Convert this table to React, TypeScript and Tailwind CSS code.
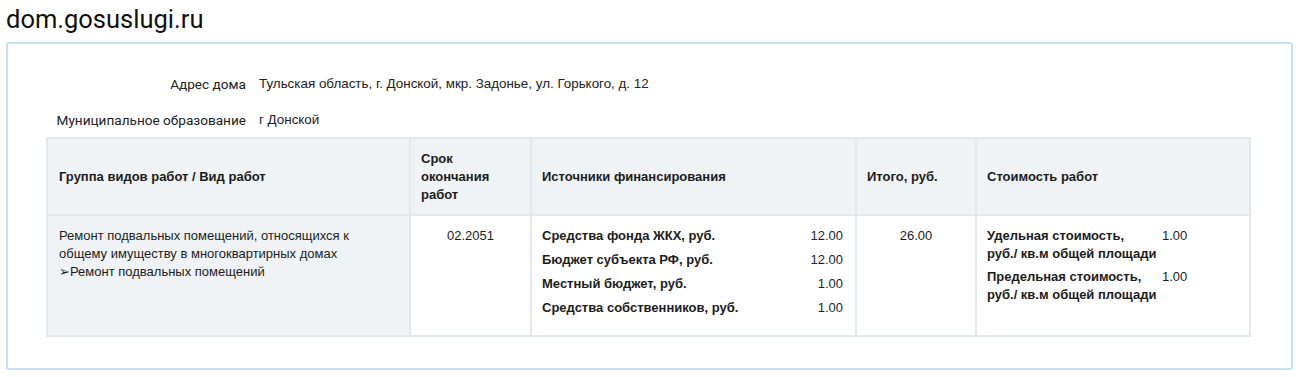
const sources = [
  { label: "Средства фонда ЖКХ, руб.", value: "12.00" },
  { label: "Бюджет субъекта РФ, руб.", value: "12.00" },
  { label: "Местный бюджет, руб.", value: "1.00" },
  { label: "Средства собственников, руб.", value: "1.00" },
];

const costs = [
  { label: "Удельная стоимость,", unit: "руб./ кв.м общей площади", value: "1.00" },
  { label: "Предельная стоимость,", unit: "руб./ кв.м общей площади", value: "1.00" },
];

function InfoRow({ label, value }: { label: string; value: string }) {
  return (
    <div className="flex h-[36px] items-center pt-[3px]">
      <div className="w-[251px] pr-[13px] text-right font-['Roboto',sans-serif] text-[13.6px] text-[#222]">
        {label}
      </div>
      <div className="text-[13.4px] text-[#222]">{value}</div>
    </div>
  );
}

export default function App() {
  return (
    <div className="min-h-[377px] bg-white font-['Liberation_Sans',Arial,sans-serif]">
      <h1 className="pl-[6px] font-['Roboto',sans-serif] text-[25.5px] leading-[38px] text-[#111]">
        dom.gosuslugi.ru
      </h1>
      <div className="mt-[4px] ml-[6px] w-[1287px] rounded-[3px] border-2 border-[#c6e1f7] pt-[21px] pb-[31px]">
        <InfoRow
          label="Адрес дома"
          value="Тульская область, г. Донской, мкр. Задонье, ул. Горького, д. 12"
        />
        <InfoRow label="Муниципальное образование" value="г Донской" />

        <table className="ml-[38px] w-[1205px] table-fixed border-separate border-spacing-[2px] bg-[#e3e8ed] text-[13px] leading-[18px] text-[#1c1c1c]">
          <colgroup>
            <col className="w-[361px]" />
            <col className="w-[119px]" />
            <col className="w-[323px]" />
            <col className="w-[118px]" />
            <col />
          </colgroup>
          <thead>
            <tr className="h-[75px] bg-[#eff3f6] text-left align-middle font-bold">
              <th className="px-[11px]">Группа видов работ / Вид работ</th>
              <th className="px-[10px]">Срок окончания работ</th>
              <th className="px-[10px]">Источники финансирования</th>
              <th className="px-[10px]">Итого, руб.</th>
              <th className="px-[10px]">Стоимость работ</th>
            </tr>
          </thead>
          <tbody>
            <tr className="h-[119px] align-top">
              <td className="bg-[#eff3f6] px-[11px] pt-[11px]">
                Ремонт подвальных помещений, относящихся к общему имуществу в
                многоквартирных домах
                <br />
                ➢Ремонт подвальных помещений
              </td>
              <td className="bg-white px-[10px] pt-[11px] text-center">02.2051</td>
              <td className="bg-white pt-[11px] pr-[12px] pl-[10px]">
                <div className="flex flex-col gap-[6px]">
                  {sources.map((s) => (
                    <div key={s.label} className="flex justify-between">
                      <span className="font-bold">{s.label}</span>
                      <span>{s.value}</span>
                    </div>
                  ))}
                </div>
              </td>
              <td className="bg-white px-[10px] pt-[11px] text-center">26.00</td>
              <td className="bg-white px-[10px] pt-[11px]">
                <div className="flex flex-col gap-[5px]">
                  {costs.map((c) => (
                    <div key={c.label} className="flex gap-[3px]">
                      <div className="w-[172px] font-bold">
                        {c.label}
                        <br />
                        {c.unit}
                      </div>
                      <div>{c.value}</div>
                    </div>
                  ))}
                </div>
              </td>
            </tr>
          </tbody>
        </table>
      </div>
    </div>
  );
}
